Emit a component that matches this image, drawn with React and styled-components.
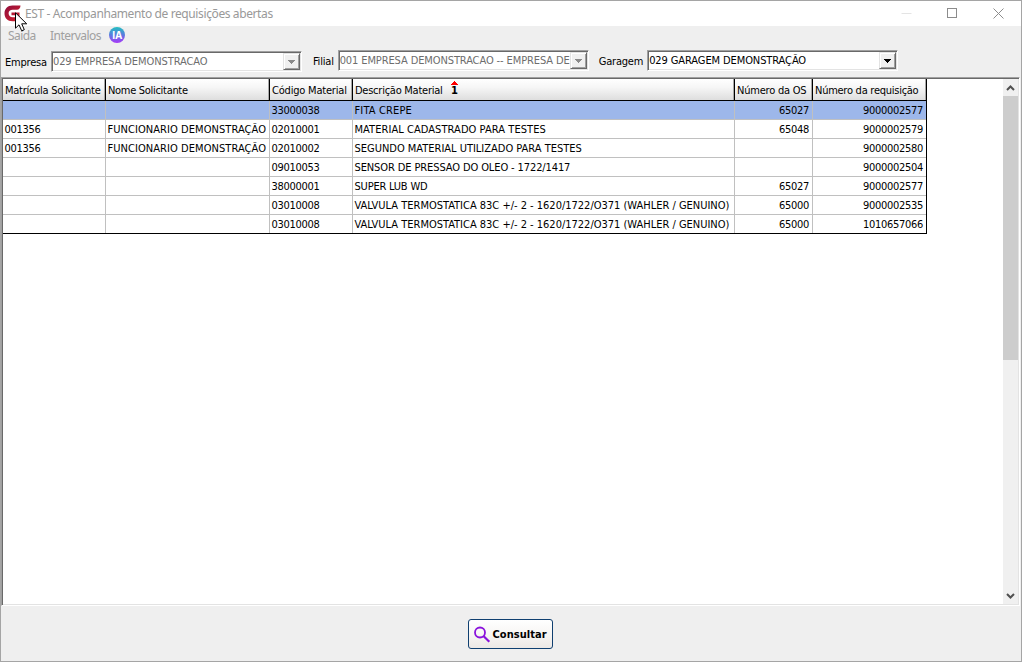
import React from "react";
import styled, { createGlobalStyle, css } from "styled-components";

const columns = [
	{ key: "matricula", title: "Matrícula Solicitante", width: 103, space: -0.27 },
	{ key: "nome", title: "Nome Solicitante", width: 164, space: -0.3 },
	{ key: "codigo", title: "Código Material", width: 83, space: -0.2 },
	{ key: "descricao", title: "Descrição Material", width: 382, space: -0.25, sorted: true },
	{ key: "os", title: "Número da OS", width: 78, space: -0.22, right: true },
	{ key: "requisicao", title: "Número da requisição", width: 113, space: -0.26, right: true }
];

// space: letter spacing of the description
const rows = [
	{ space: 0.15, cells: ["", "", "33000038", "FITA CREPE", "65027", "9000002577"] },
	{
		space: 0.06,
		cells: ["001356", "FUNCIONARIO DEMONSTRAÇÃO", "02010001", "MATERIAL CADASTRADO PARA TESTES", "65048", "9000002579"]
	},
	{
		space: -0.01,
		cells: ["001356", "FUNCIONARIO DEMONSTRAÇÃO", "02010002", "SEGUNDO MATERIAL UTILIZADO PARA TESTES", "", "9000002580"]
	},
	{ space: -0.11, cells: ["", "", "09010053", "SENSOR DE PRESSAO DO OLEO - 1722/1417", "", "9000002504"] },
	{ space: -0.2, cells: ["", "", "38000001", "SUPER LUB WD", "65027", "9000002577"] },
	{
		space: -0.01,
		cells: ["", "", "03010008", "VALVULA TERMOSTATICA 83C +/- 2 - 1620/1722/O371 (WAHLER / GENUINO)", "65000", "9000002535"]
	},
	{
		space: -0.01,
		cells: ["", "", "03010008", "VALVULA TERMOSTATICA 83C +/- 2 - 1620/1722/O371 (WAHLER / GENUINO)", "65000", "1010657066"]
	}
];

const cellSpace = (row, c) => {
	if (c === 1) return 0.06;
	if (c === 3) return row.space;
	return -0.3;
};

const Logo = () => (
	<svg width="17" height="17" viewBox="0 0 17 17">
		<defs>
			<linearGradient id="logo" x1="0" y1="0" x2="1" y2="1">
				<stop offset="0" stopColor="#8d0d3c" />
				<stop offset="1" stopColor="#d8232e" />
			</linearGradient>
		</defs>
		<path
			d="M16.500 0.500H8.500C3.500 0.500 0.500 4 0.500 8.500s3 7.700 8 7.700H15.500V7.500H7.500V10.200h4V12.300H8.700C6 12.300 4.600 10.600 4.600 8.300S6.200 4.800 8.700 4.800H13C15 4.800 16.500 3 16.500 0.500Z"
			fill="url(#logo)"
		/>
	</svg>
);

const Cursor = () => (
	<Pointer width="13" height="20" viewBox="0 0 13 20">
		<path
			d="M0.500 0.800V16.200L4 12.800L6.700 18.800L9.300 17.700L6.700 11.800H11.700Z"
			fill="#fff"
			stroke="#000"
			strokeWidth="1"
		/>
	</Pointer>
);

const Combo = ({ label, value, disabled, gap, drop, space }) => (
	<Field $gap={gap} $drop={drop}>
		<Label>{label}</Label>
		<Box>
			<Value $disabled={disabled} $space={space}>{value}</Value>
			<DropButton>
				<svg width="7" height="4" viewBox="0 0 7 4" shapeRendering="crispEdges">
					<path d="M0 0H7V1H6V2H5V3H4V4H3V3H2V2H1V1H0Z" fill={disabled ? "#8a8a8a" : "#000"} />
				</svg>
			</DropButton>
		</Box>
	</Field>
);

export default function App() {
	return (
		<Window>
			<GlobalStyle />
			<TitleBar>
				<Logo />
				<Title>EST - Acompanhamento de requisições abertas</Title>
				<WindowButtons>
					<svg width="11" height="11" viewBox="0 0 11 11">
						<path d="M0.500 5.500H10.500" stroke="#e4e4e4" />
					</svg>
					<svg width="11" height="11" viewBox="0 0 11 11">
						<rect x="0.500" y="0.500" width="9" height="9" fill="none" stroke="#8c8c8c" />
					</svg>
					<svg width="11" height="11" viewBox="0 0 11 11">
						<path d="M0.500 0.500L10.500 10.500M10.500 0.500L0.500 10.500" stroke="#8c8c8c" />
					</svg>
				</WindowButtons>
				<Cursor />
			</TitleBar>

			<Menu>
				<MenuItem $width={42}>Saída</MenuItem>
				<MenuItem $width={59}>Intervalos</MenuItem>
				<Badge>IA</Badge>
			</Menu>

			<Filters>
				<Combo label="Empresa" value="029 EMPRESA DEMONSTRACAO" drop={1} space={-0.08} disabled />
				<Combo label="Filial" value="001 EMPRESA DEMONSTRACAO -- EMPRESA DE" gap={11} space={-0.11} disabled />
				<Combo label="Garagem" value="029 GARAGEM DEMONSTRAÇÃO" gap={10} space={-0.1} />
			</Filters>

			<Panel>
				<Content>
					<Grid>
						<HeaderRow>
							{columns.map(col => (
								<HeaderCell key={col.key} $width={col.width} $space={col.space}>
									<span>{col.title}</span>
									{col.sorted && (
										<Sort>
											<svg width="7" height="4" viewBox="0 0 7 4" shapeRendering="crispEdges">
												<path d="M3 0H4V1H5V2H6V3H7V4H0V3H1V2H2V1H3Z" fill="#f00" />
											</svg>
											<b>1</b>
										</Sort>
									)}
								</HeaderCell>
							))}
						</HeaderRow>
						{rows.map((row, i) => (
							<Row key={i} $selected={i === 0} $last={i === rows.length - 1}>
								{row.cells.map((text, c) => (
									<Cell
										key={c}
										$width={columns[c].width}
										$right={columns[c].right}
										$space={cellSpace(row, c)}
										$last={c === 5}
									>
										{text}
									</Cell>
								))}
							</Row>
						))}
					</Grid>
				</Content>
				<ScrollBar>
					<ScrollButton>
						<svg width="9" height="6" viewBox="0 0 9 6">
							<path d="M1 5L4.500 1.500L8 5" fill="none" stroke="#505050" strokeWidth="2" />
						</svg>
					</ScrollButton>
					<Thumb />
					<ScrollButton $bottom>
						<svg width="9" height="6" viewBox="0 0 9 6">
							<path d="M1 1L4.500 4.500L8 1" fill="none" stroke="#505050" strokeWidth="2" />
						</svg>
					</ScrollButton>
				</ScrollBar>
			</Panel>

			<Footer>
				<Button>
					<svg width="17" height="17" viewBox="0 0 17 17">
						<circle cx="6" cy="6.500" r="5" fill="none" stroke="#8a12dc" strokeWidth="1.800" />
						<path d="M9.700 10.300L15.300 15.800" stroke="#8a12dc" strokeWidth="2.200" />
					</svg>
					<span>Consultar</span>
				</Button>
			</Footer>
		</Window>
	);
}

const GlobalStyle = createGlobalStyle`
	* {
		box-sizing: border-box;
	}

	body {
		margin: 0;
		overflow: hidden;
		font-family: "DejaVu Sans Condensed", "DejaVu Sans", sans-serif;
		font-stretch: condensed;
		font-size: 11px;
		color: #000;
	}

	svg {
		display: block;
		flex: none;
	}
`;

const Window = styled.div`
	display: flex;
	flex-direction: column;
	width: 1022px;
	height: 662px;
	border: 1px solid #a5a5a5;
	background: #efefef;
	white-space: nowrap;
`;

const TitleBar = styled.div`
	position: relative;
	display: flex;
	align-items: center;
	height: 25px;
	padding: 0 17px 0 3px;
	background: #fff;
`;

const Title = styled.span`
	margin-left: 4px;
	font: 12px "Noto Sans", sans-serif;
	letter-spacing: -0.39px;
	color: #999;
`;

const WindowButtons = styled.div`
	display: flex;
	gap: 35px;
	margin-left: auto;
`;

const Pointer = styled.svg`
	position: absolute;
	left: 14px;
	top: 11px;
	z-index: 1;
`;

const Menu = styled.div`
	display: flex;
	align-items: center;
	height: 18px;
	padding-left: 7px;
`;

const MenuItem = styled.span`
	width: ${({ $width }) => $width}px;
	font: 12px "Noto Sans", sans-serif;
	letter-spacing: -0.55px;
	color: #a0a0a0;
`;

const Badge = styled.span`
	display: flex;
	align-items: center;
	justify-content: center;
	width: 16px;
	height: 16px;
	border-radius: 50%;
	background: linear-gradient(#22bfc0, #5b7be0 50%, #a838f8);
	font: bold 10px "Open Sans", sans-serif;
	color: #fff;
`;

const Filters = styled.div`
	display: flex;
	align-items: flex-start;
	height: 33px;
	padding: 6px 0 0 4px;
`;

const Field = styled.div`
	display: flex;
	align-items: center;
	margin: ${({ $drop }) => $drop || 0}px 0 0 ${({ $gap }) => $gap || 0}px;
`;

const Label = styled.span`
	margin: 2px 4px 0 0;
	letter-spacing: -0.2px;
`;

const Box = styled.div`
	display: flex;
	width: 251px;
	height: 21px;
	border: 1px solid;
	border-color: #a0a0a0 #fff #fff #a0a0a0;
	background: #fff;
	box-shadow: inset 1px 1px #696969, inset -1px -1px #e3e3e3;
	padding: 1px;
`;

const Value = styled.span`
	flex: 1;
	line-height: 17px;
	letter-spacing: ${({ $space }) => $space}px;
	color: ${({ $disabled }) => ($disabled ? "#6d6d6d" : "#000")};
`;

const DropButton = styled.span`
	display: flex;
	align-items: center;
	justify-content: center;
	width: 17px;
	height: 17px;
	border: 1px solid;
	border-color: #e3e3e3 #696969 #696969 #e3e3e3;
	background: #f0f0f0;
	box-shadow: inset 1px 1px #fff, inset -1px -1px #a0a0a0;
`;

const Panel = styled.div`
	display: flex;
	width: 1019px;
	height: 529px;
	border: 1px solid;
	border-color: #a0a0a0 #fff #fff #a0a0a0;
	box-shadow: inset 1px 1px #696969, inset -1px -1px #e3e3e3;
	padding: 1px;
	background: #fff;
`;

const Content = styled.div`
	flex: 1;
`;

const Grid = styled.div`
	width: 924px;
	border-right: 1px solid #000;
`;

const HeaderRow = styled.div`
	display: flex;
	height: 22px;
	border-bottom: 1px solid #000;
`;

const HeaderCell = styled.div`
	display: flex;
	align-items: center;
	width: ${({ $width }) => $width}px;
	padding: 1px 0 0 2px;
	border-right: 1px solid #000;
	background: linear-gradient(#fff, #f6f6f6 40%, #dedede);
	box-shadow: inset -1px 0 #a8a8a8;
	letter-spacing: ${({ $space }) => $space}px;

	&:last-child {
		border-right: 0;
	}
`;

const Sort = styled.span`
	display: flex;
	flex-direction: column;
	align-items: center;
	align-self: flex-start;
	width: 9px;
	margin: 1px 0 0 7.500px;

	b {
		margin-top: 1px;
		font: bold 10px/10px "DejaVu Sans", sans-serif;
		letter-spacing: 0;
	}
`;

const Row = styled.div`
	display: flex;
	height: 19px;
	background: ${({ $selected }) => ($selected ? "#9db7ea" : "#fff")};

	${({ $last }) =>
		$last &&
		css`
			border-bottom: 1px solid #000;
		`}
`;

const Cell = styled.div`
	width: ${({ $width }) => $width}px;
	height: 19px;
	padding: 1px 3px 0 1.5px;
	border-right: ${({ $last }) => ($last ? 0 : 1)}px solid #c0c0c0;
	border-bottom: 1px solid #c0c0c0;
	line-height: 18px;
	letter-spacing: ${({ $space }) => $space}px;
	text-align: ${({ $right }) => ($right ? "right" : "left")};

	${Row}:last-child & {
		height: 18px;
		border-bottom: 0;
	}
`;

const ScrollBar = styled.div`
	display: flex;
	flex-direction: column;
	width: 15px;
	background: #f0f0f0;
`;

const ScrollButton = styled.div`
	display: flex;
	align-items: center;
	justify-content: center;
	height: 17px;
	margin-top: ${({ $bottom }) => ($bottom ? "auto" : 0)};
`;

const Thumb = styled.div`
	height: 264px;
	background: #cdcdcd;
`;

const Footer = styled.div`
	display: flex;
	justify-content: center;
	padding: 13px 2px 0 0;
`;

const Button = styled.button`
	display: flex;
	align-items: center;
	gap: 2px;
	width: 85px;
	height: 30px;
	padding: 0 0 0 5px;
	border: 1px solid #0f3f70;
	border-radius: 3px;
	background: linear-gradient(#fff, #f8f6f4 50%, #ece8e5);
	font: bold 11px "DejaVu Sans Condensed", "DejaVu Sans", sans-serif;
	font-stretch: condensed;
	letter-spacing: 0.05px;
	color: #000;
`;
